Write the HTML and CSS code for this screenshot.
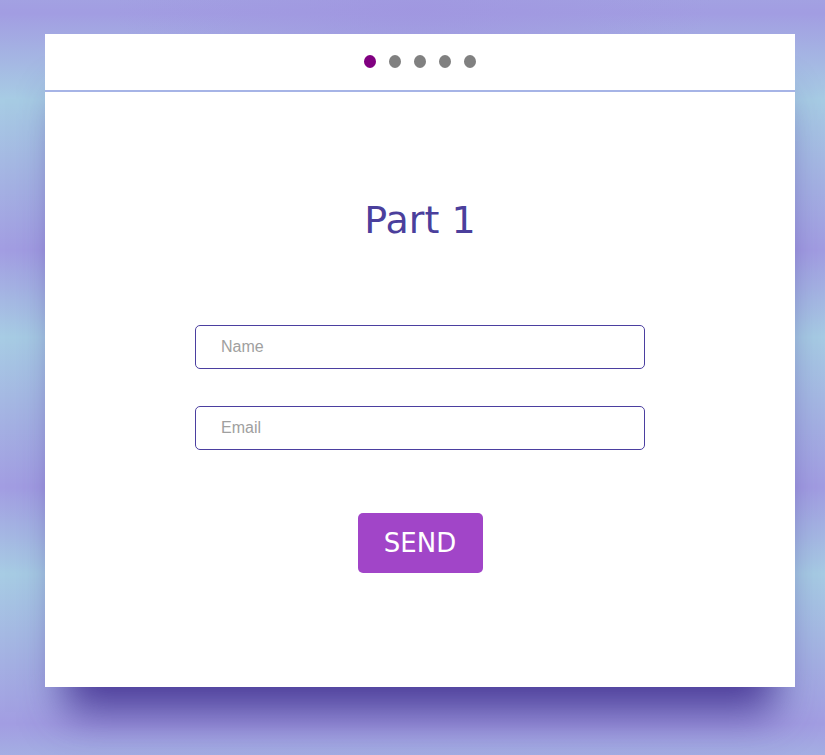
FILE: index.html
```html
<!DOCTYPE html>
<html>
<head>
<meta charset="utf-8">
<link rel="stylesheet" href="styles.css">
</head>
<body>
<div class="card">
  <div class="steps">
    <span class="dot active"></span>
    <span class="dot"></span>
    <span class="dot"></span>
    <span class="dot"></span>
    <span class="dot"></span>
  </div>
  <div class="content">
    <h1 class="title">Part 1</h1>
    <form class="form">
      <input class="field" type="text" placeholder="Name">
      <input class="field" type="email" placeholder="Email">
      <button class="send" type="button">SEND</button>
    </form>
  </div>
</div>
</body>
</html>
```

FILE: styles.css
```css
html, body {
  margin: 0;
  height: 100%;
}
body {
  background:
    radial-gradient(ellipse 300px 80px at 50% 10px, rgba(160,150,224,0.8), rgba(160,150,224,0)),
    repeating-linear-gradient(180deg, #a29de2 13px, #a7cce4 100px, #a29de2 250px);
  padding: 34px 0 0 45px;
  box-sizing: border-box;
  overflow: hidden;
}
.card {
  width: 750px;
  height: 653px;
  background: #fff;
  box-shadow: 0 45px 40px -20px rgba(60, 40, 140, 0.85);
  display: flex;
  flex-direction: column;
}
.steps {
  height: 54px;
  padding-bottom: 2px;
  border-bottom: 2px solid #a6b4e6;
  display: flex;
  justify-content: center;
  align-items: center;
  gap: 13px;
}
.dot {
  width: 12px;
  height: 13px;
  border-radius: 50%;
  background: #808080;
}
.dot.active {
  background: #800080;
}
.content {
  display: flex;
  flex-direction: column;
  align-items: center;
}
.title {
  margin: 104px 0 0;
  font-family: "DejaVu Sans", Tahoma, sans-serif;
  font-weight: normal;
  font-size: 38px;
  line-height: 48px;
  color: #4b3f9c;
}
.form {
  margin-top: 81px;
  display: flex;
  flex-direction: column;
  align-items: center;
}
.field {
  width: 450px;
  height: 44px;
  box-sizing: border-box;
  border: 1px solid #4b3fa0;
  border-radius: 5px;
  padding: 0 25px;
  font-family: "Liberation Sans", Arial, sans-serif;
  font-size: 16px;
  color: #333;
  margin-bottom: 37px;
  outline: none;
}
.field::placeholder {
  color: #a0a0a0;
}
.send {
  margin-top: 26px;
  width: 125px;
  height: 60px;
  border: none;
  border-radius: 5px;
  background: #a145c8;
  color: #fff;
  font-family: "DejaVu Sans", Tahoma, sans-serif;
  font-size: 26px;
  padding: 0;
}
```
